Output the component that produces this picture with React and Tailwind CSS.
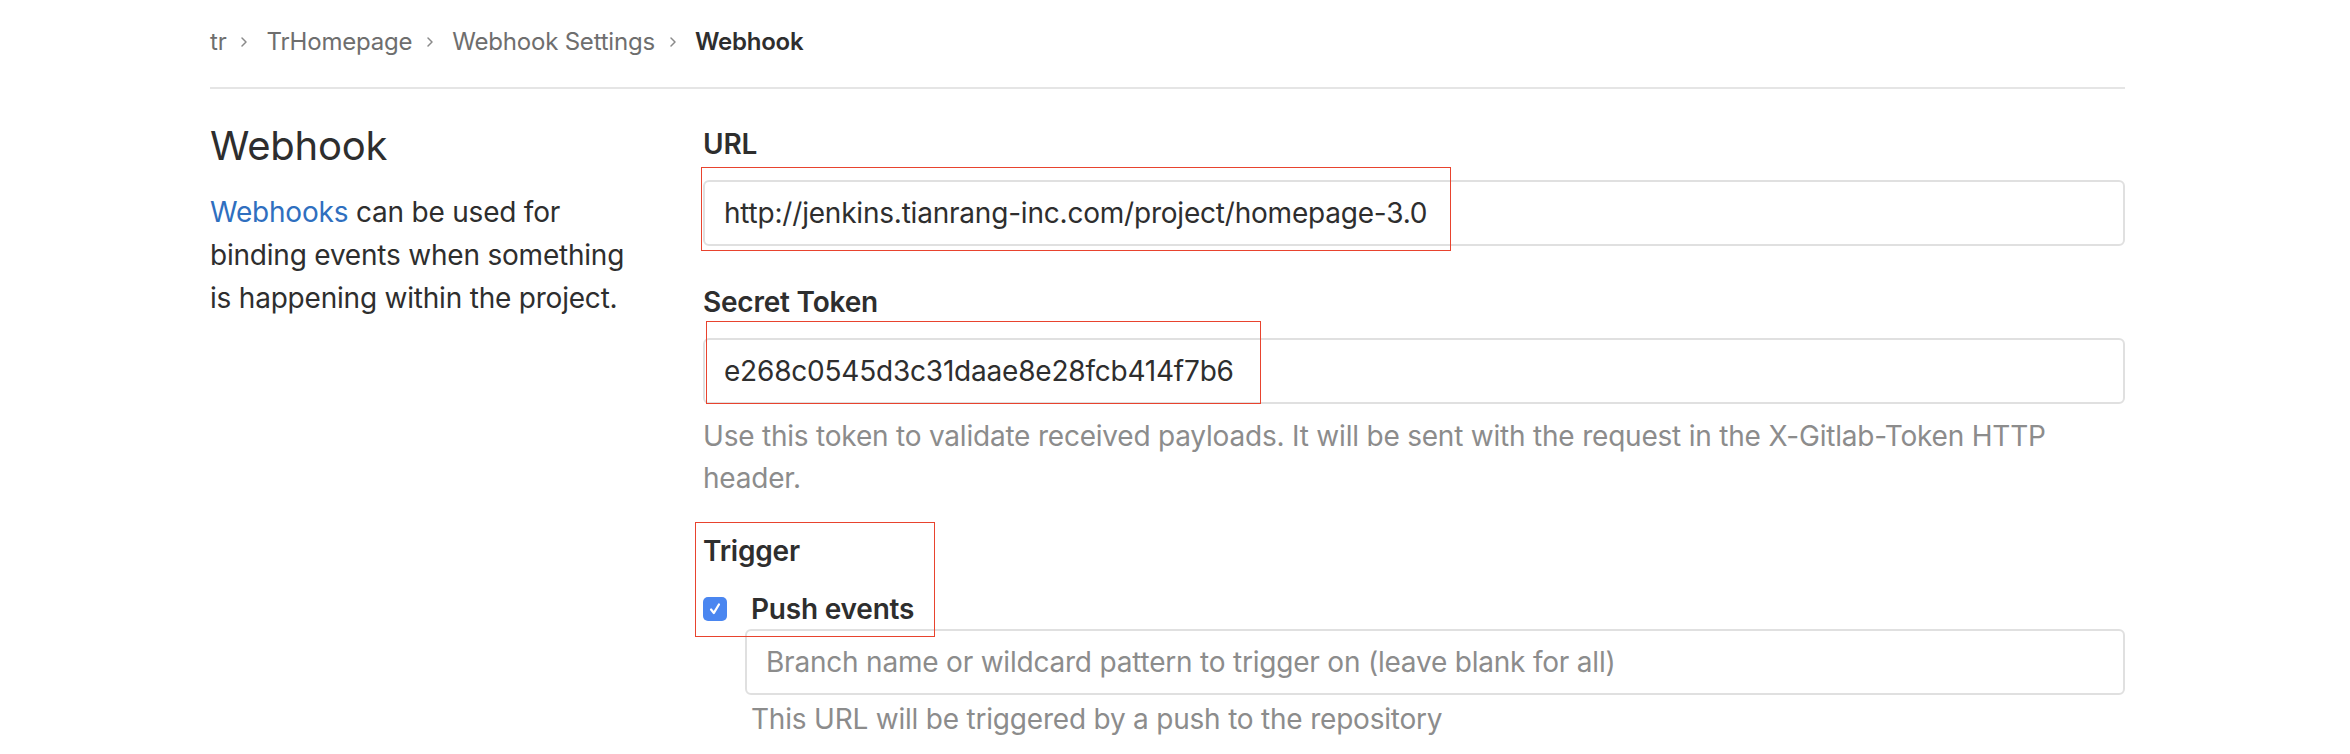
import React from "react";

const Chevron = () => (
  <svg width="8" height="12" viewBox="0 0 8 12" className="ml-[14px] mr-[18px] text-[#8a8a8a]">
    <path d="M2 2 L6 6 L2 10" fill="none" stroke="currentColor" strokeWidth="1.5" strokeLinecap="round" strokeLinejoin="round" />
  </svg>
);

const CheckBox = () => (
  <span className="flex h-[24px] w-[24px] items-center justify-center rounded-[5px] bg-[#4a86f0]">
    <svg width="18" height="18" viewBox="0 0 16 16">
      <path d="M4.5 8.5 L7 11.5 L11.5 4" fill="none" stroke="white" strokeWidth="2" strokeLinecap="round" strokeLinejoin="round" />
    </svg>
  </span>
);

export default function App() {
  return (
    <div className="min-h-screen bg-white font-['Inter',sans-serif] tracking-[-0.013em] text-[#2e2e2e]">
      <div className="w-[1915px] ml-[210px]">
        {/* Breadcrumbs */}
        <div className="flex items-center pt-[24px] pb-[27px] border-b-2 border-[#e5e5e5] text-[24px] leading-[36px] text-[#6e6e6e]">
          <span>tr</span>
          <Chevron />
          <span>TrHomepage</span>
          <Chevron />
          <span>Webhook Settings</span>
          <Chevron />
          <span className="font-semibold text-[#2e2e2e]">Webhook</span>
        </div>

        <div className="flex pt-[35px]">
          {/* Left column */}
          <div className="w-[493px] shrink-0 pr-[60px]">
            <h4 className="text-[40px] leading-[44px] font-normal">Webhook</h4>
            <p className="mt-[23px] text-[28px] leading-[43px]">
              <a className="text-[#2f6fbf]">Webhooks</a> can be used for binding events when something is happening within the project.
            </p>
          </div>

          {/* Right column */}
          <div className="flex-1 text-[28px]">
            {/* URL */}
            <div className="mb-[36px]">
              <label className="block font-semibold leading-[40px] mb-[16px]">URL</label>
              <div className="relative">
                <div className="h-[66px] flex items-center rounded-[6px] border-2 border-[#e0e0e0] px-[19px] leading-[40px]">
                  http://jenkins.tianrang-inc.com/project/homepage-3.0
                </div>
                <div className="absolute left-[-2px] top-[-13px] w-[750px] h-[84px] border-[1.5px] border-[#e8432e] pointer-events-none" />
              </div>
            </div>

            {/* Secret Token */}
            <div className="mb-[32px]">
              <label className="block font-semibold leading-[40px] mb-[16px]">Secret Token</label>
              <div className="relative">
                <div className="h-[66px] flex items-center rounded-[6px] border-2 border-[#e0e0e0] px-[19px] leading-[40px]">
                  e268c0545d3c31daae8e28fcb414f7b6
                </div>
                <div className="absolute left-[3px] top-[-17px] w-[555px] h-[83px] border-[1.5px] border-[#e8432e] pointer-events-none" />
              </div>
              <p className="mt-[11px] leading-[42px] text-[#8c8c8c] pr-[40px]">
                Use this token to validate received payloads. It will be sent with the request in the X-Gitlab-Token HTTP header.
              </p>
            </div>

            {/* Trigger */}
            <div className="relative">
              <label className="block font-semibold leading-[40px] mb-[18px]">Trigger</label>
              <div className="flex items-center gap-[24px] leading-[40px]">
                <CheckBox />
                <span className="font-semibold">Push events</span>
              </div>
              <div className="ml-[42px]">
                <div className="h-[66px] flex items-center rounded-[6px] border-2 border-[#e0e0e0] px-[19px] text-[#8c8c8c]">
                  Branch name or wildcard pattern to trigger on (leave blank for all)
                </div>
                <p className="mt-[3px] pl-[6px] leading-[42px] text-[#8c8c8c]">
                  This URL will be triggered by a push to the repository
                </p>
              </div>
              <div className="absolute left-[-8px] top-[-9px] w-[240px] h-[115px] border-[1.5px] border-[#e8432e] pointer-events-none" />
            </div>
          </div>
        </div>
      </div>
    </div>
  );
}
